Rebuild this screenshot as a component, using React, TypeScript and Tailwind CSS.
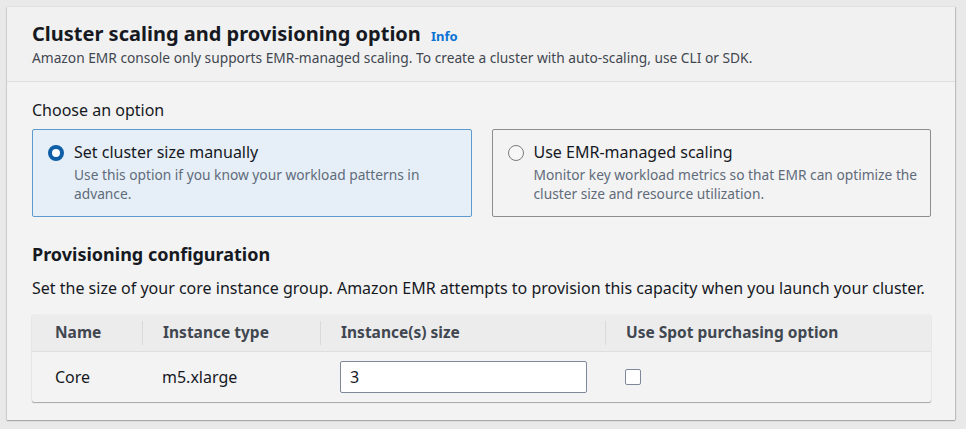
import React from 'react';

const font = { fontFamily: '"Noto Sans", "Open Sans", sans-serif' };

function RadioCard({
  selected,
  title,
  text,
}: {
  selected: boolean;
  title: string;
  text: string;
}) {
  return (
    <div
      className={
        selected
          ? 'flex h-[88px] gap-[10px] rounded-[2px] border border-[#5d9ad0] bg-[#e6eff7] pl-[15px] pr-[8px] pt-[12px]'
          : 'flex h-[88px] gap-[10px] rounded-[2px] border border-[#8d8d8d] bg-[#f3f3f3] pl-[15px] pr-[8px] pt-[12px]'
      }
    >
      <div className="pt-[3px]">
        {selected ? (
          <div className="h-[16px] w-[16px] rounded-full border-[4px] border-[#0f5ea8] bg-white" />
        ) : (
          <div className="h-[16px] w-[16px] rounded-full border border-[#7c7c7c] bg-[#f7f7f7]" />
        )}
      </div>
      <div>
        <div className="text-[16px] leading-[20px] text-[#16191f]">{title}</div>
        <div className="mt-[3px] text-[13.75px] leading-[19px] text-[#5f6b7a]">{text}</div>
      </div>
    </div>
  );
}

export default function App() {
  return (
    <div className="min-h-screen bg-[#e9e9e9] pb-[9px] pl-[7px] pr-[11px] pt-[7px]" style={font}>
      <div className="bg-[#f3f3f3] shadow-[0_1px_1px_rgba(0,0,0,0.25),-1px_0_1px_rgba(0,0,0,0.08),1px_0_1px_rgba(0,0,0,0.15)]">
        {/* Header */}
        <div className="h-[75px] border-b border-[#dedede] bg-[#f1f1f1] px-[25px] pt-[13px]">
          <div className="flex items-baseline gap-[10px]">
            <h2 className="text-[20px] font-bold leading-[28px] text-[#16191f]">
              Cluster scaling and provisioning option
            </h2>
            <span className="text-[13px] font-bold text-[#0972d3]">Info</span>
          </div>
          <p className="mt-[1px] text-[13.75px] leading-[18px] text-[#414750]">
            Amazon EMR console only supports EMR-managed scaling. To create a cluster with auto-scaling, use CLI or SDK.
          </p>
        </div>

        {/* Body */}
        <div className="pb-[18px] pl-[25px] pr-[24px] pt-[17px]">
          <div className="text-[16px] leading-[22px] text-[#16191f]">Choose an option</div>
          <div className="mt-[8px] grid grid-cols-2 gap-[20px]">
            <RadioCard
              selected
              title="Set cluster size manually"
              text="Use this option if you know your workload patterns in advance."
            />
            <RadioCard
              selected={false}
              title="Use EMR-managed scaling"
              text="Monitor key workload metrics so that EMR can optimize the cluster size and resource utilization."
            />
          </div>

          <h3 className="mt-[24px] text-[18px] font-bold leading-[26px] text-[#16191f]">
            Provisioning configuration
          </h3>
          <p className="mt-[10px] text-[16px] leading-[22px] text-[#16191f]">
            Set the size of your core instance group. Amazon EMR attempts to provision this capacity when you launch your cluster.
          </p>

          <div className="mt-[16px] overflow-hidden rounded-[2px] bg-[#f3f3f3] shadow-[0_1px_1px_rgba(0,0,0,0.3),0_0_1px_rgba(0,0,0,0.25)]">
            <div className="grid h-[37px] grid-cols-[110px_178px_285px_1fr] items-center border-b border-[#dfdfdf] bg-[#ececec] text-[15.5px] font-bold text-[#414750]">
              <div className="pl-[23px]">Name</div>
              <div className="border-l border-[#dadada] pl-[20px]">Instance type</div>
              <div className="border-l border-[#dadada] pl-[20px]">Instance(s) size</div>
              <div className="border-l border-[#dadada] pl-[20px]">Use Spot purchasing option</div>
            </div>
            <div className="grid h-[50px] grid-cols-[110px_178px_285px_1fr] items-center text-[16px] text-[#16191f]">
              <div className="pl-[23px]">Core</div>
              <div className="pl-[20px]">m5.xlarge</div>
              <div className="pl-[20px]">
                <div className="flex h-[32px] w-[247px] items-center rounded-[2px] border border-[#7d8998] bg-white px-[9px]">
                  3
                </div>
              </div>
              <div className="pl-[20px]">
                <div className="h-[16px] w-[16px] rounded-[2px] border border-[#7d8998] bg-white" />
              </div>
            </div>
          </div>
        </div>
      </div>
    </div>
  );
}
